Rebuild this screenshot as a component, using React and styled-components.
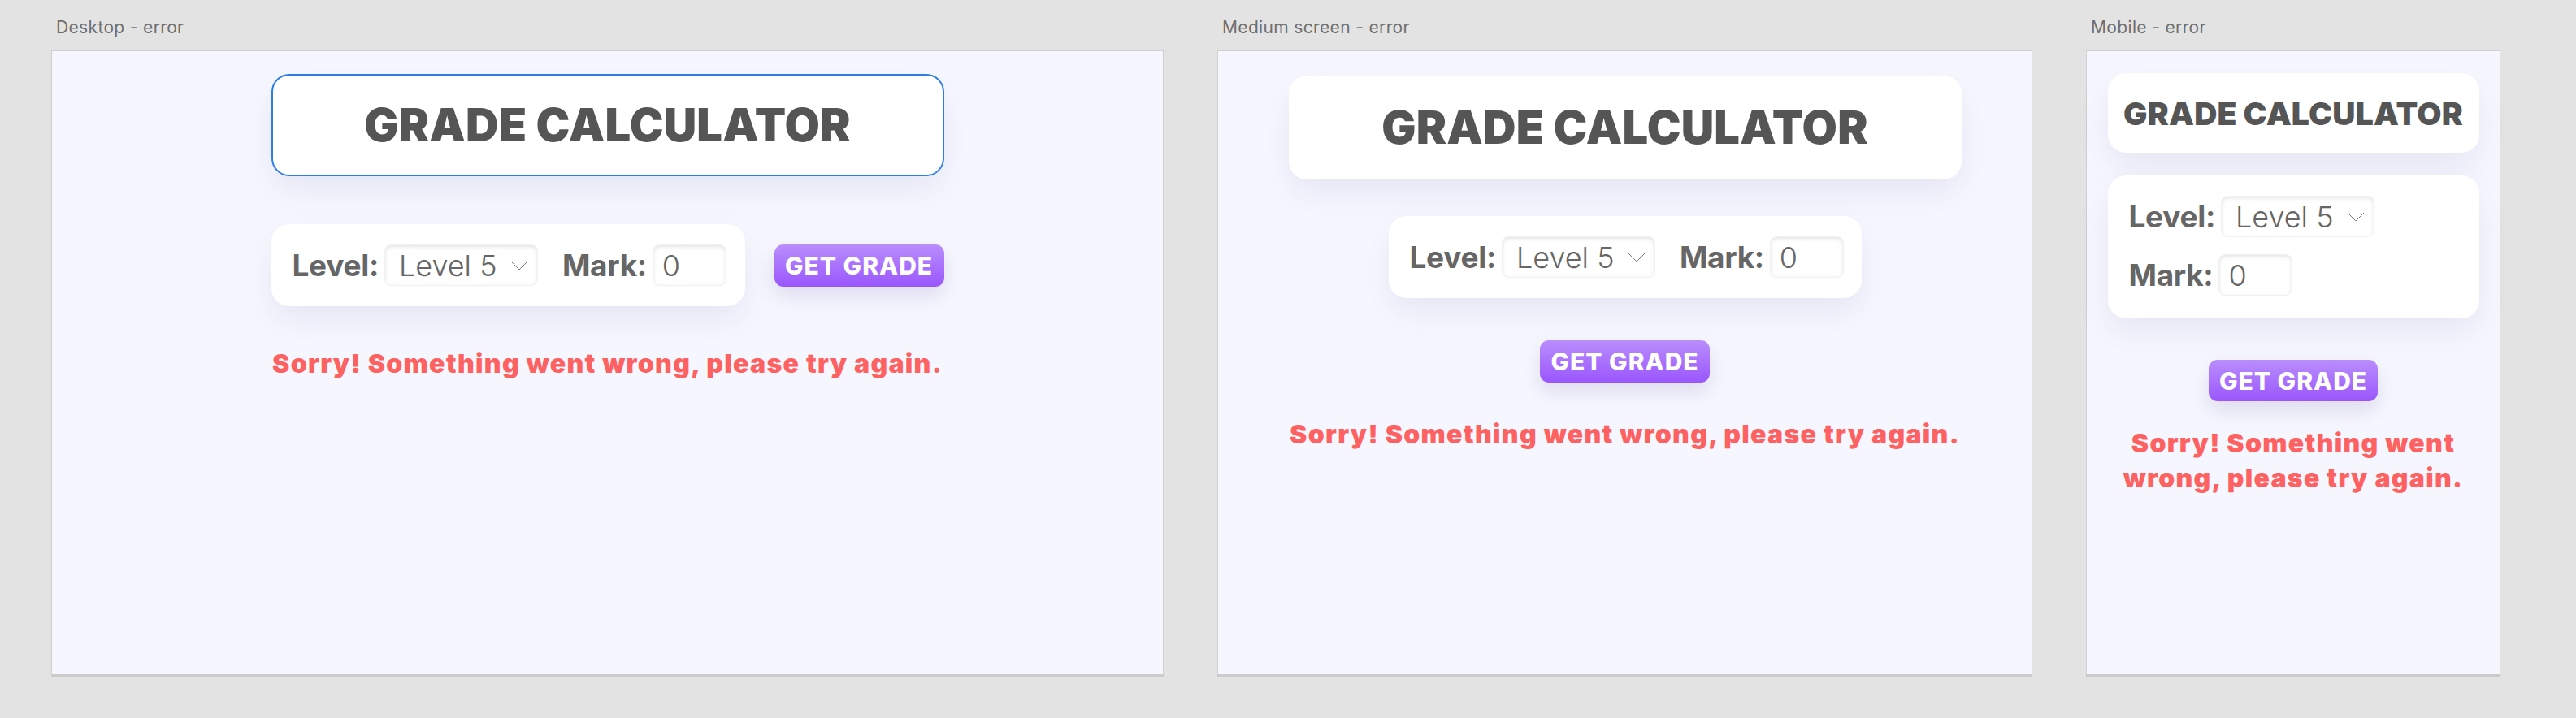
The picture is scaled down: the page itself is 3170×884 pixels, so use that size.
import React from 'react'
import styled, { createGlobalStyle, css } from 'styled-components'

const GlobalStyle = createGlobalStyle`
  html, body {
    margin: 0;
    padding: 0;
    background: #e3e3e3;
  }
  body {
    font-family: Inter, "Noto Sans", sans-serif;
  }
  * {
    box-sizing: border-box;
  }
`

const Canvas = styled.div`
  display: flex;
  align-items: flex-start;
  gap: 66px;
  padding: 21px 0 0 63px;
  min-height: 884px;
`

const Artboard = styled.section`
  width: ${p => p.$width}px;
  display: flex;
  flex-direction: column;
`

const ArtboardName = styled.div`
  font-size: 21px;
  line-height: 25px;
  letter-spacing: 0.35px;
  color: #6e6e6e;
  padding-left: 6px;
  margin-bottom: 16px;
`

const Screen = styled.div`
  height: 771px;
  background: #f6f7fe;
  border: 1px solid #cfcfcf;
  border-bottom: 3px solid #cbcbcb;
  display: flex;
  flex-direction: column;
  align-items: center;
  padding-top: ${p => p.$top}px;
`

const Stack = styled.div`
  display: flex;
  flex-direction: column;
  align-items: ${p => (p.$variant === 'medium' ? 'center' : 'stretch')};
  width: ${p => (p.$variant === 'mobile' ? '457px' : '828px')};
`

const TitleCard = styled.div`
  height: ${p => p.$height}px;
  width: 100%;
  background: #fff;
  border-radius: 22px;
  border: 2px solid ${p => (p.$selected ? '#2c7ee6' : 'transparent')};
  box-shadow: 0 18px 42px rgba(64, 72, 140, 0.09);
  display: flex;
  align-items: center;
  justify-content: center;
`

const Title = styled.h1`
  margin: 0;
  font-size: ${p => p.$size}px;
  font-weight: 900;
  line-height: 1;
  color: #555555;
  letter-spacing: 0.2px;
  white-space: nowrap;
`

const Controls = styled.div`
  display: flex;
  align-items: center;
  margin-top: ${p => p.$gapTop}px;
  ${p =>
    p.$variant === 'desktop'
      ? css`
          flex-direction: row;
          gap: 36px;
        `
      : css`
          flex-direction: column;
          gap: ${p.$variant === 'mobile' ? 51 : 52}px;
        `}
`

const FormCard = styled.div`
  width: ${p => p.$width}px;
  background: #fff;
  border-radius: 22px;
  box-shadow: 0 18px 42px rgba(64, 72, 140, 0.09);
  padding: 25px 24px 25px 26px;
  display: flex;
  flex-direction: ${p => (p.$stacked ? 'column' : 'row')};
  align-items: ${p => (p.$stacked ? 'flex-start' : 'center')};
  gap: ${p => (p.$stacked ? 21 : 30)}px;
  ${p => p.$stacked && css`padding-bottom: 28px;`}
`

const Field = styled.label`
  display: flex;
  align-items: center;
  gap: 7px;
`

const FieldName = styled.span`
  font-size: 37px;
  font-weight: 700;
  color: #666666;
  letter-spacing: -0.3px;
`

const insetBox = css`
  height: 51px;
  background: #fff;
  border: 1px solid #f1f1f1;
  border-radius: 8px;
  box-shadow: inset 0 2px 5px rgba(0, 0, 0, 0.11);
  font-family: inherit;
  font-size: 36px;
  font-weight: 300;
  color: #666666;
`

const LevelSelect = styled.div`
  ${insetBox};
  width: 189px;
  display: flex;
  align-items: center;
  justify-content: space-between;
  padding: 0 11px 0 17px;
`

const MarkInput = styled.input`
  ${insetBox};
  width: 91px;
  padding: 0 11px;
  outline: none;
`

const GetGradeButton = styled.button`
  width: ${p => (p.$small ? 208 : 209)}px;
  height: ${p => (p.$small ? 51 : 52)}px;
  border: none;
  border-radius: 11px;
  background: linear-gradient(180deg, #b98efc 0%, #9a56fd 100%);
  box-shadow: 0 12px 26px rgba(70, 60, 150, 0.14);
  color: #fff;
  font-family: inherit;
  font-size: 30px;
  font-weight: 800;
  letter-spacing: 1px;
  cursor: pointer;
  padding: 0;
`

const ErrorText = styled.p`
  margin: ${p => p.$gapTop}px 0 0;
  font-size: 32px;
  font-weight: 900;
  line-height: 43px;
  color: #fe6161;
  text-align: center;
  letter-spacing: 1.3px;
`

const Chevron = () => (
  <svg width="22" height="12" viewBox="0 0 22 12">
    <path d="M1 1 L11 11 L21 1" fill="none" stroke="#7a7a7a" strokeWidth="1" />
  </svg>
)

const layouts = {
  desktop: { top: 28, titleH: 126, titleSize: 56, controlsTop: 59, formW: 583, errorTop: 49 },
  medium: { top: 30, titleH: 128, titleSize: 56, controlsTop: 45, formW: 582, errorTop: 42 },
  mobile: { top: 27, titleH: 98, titleSize: 39, controlsTop: 28, formW: 457, errorTop: 30 },
}

const Calculator = ({ variant }) => {
  const l = layouts[variant]
  return (
    <Stack $variant={variant}>
      <TitleCard $height={l.titleH} $selected={variant === 'desktop'}>
        <Title $size={l.titleSize}>GRADE CALCULATOR</Title>
      </TitleCard>
      <Controls $variant={variant} $gapTop={l.controlsTop}>
        <FormCard $width={l.formW} $stacked={variant === 'mobile'}>
          <Field>
            <FieldName>Level:</FieldName>
            <LevelSelect>
              <span>Level 5</span>
              <Chevron />
            </LevelSelect>
          </Field>
          <Field>
            <FieldName>Mark:</FieldName>
            <MarkInput defaultValue="0" />
          </Field>
        </FormCard>
        <GetGradeButton $small={variant === 'mobile'}>GET GRADE</GetGradeButton>
      </Controls>
      <ErrorText $gapTop={l.errorTop}>Sorry! Something went wrong, please try again.</ErrorText>
    </Stack>
  )
}

const screens = [
  { name: 'Desktop - error', width: 1369, variant: 'desktop' },
  { name: 'Medium screen - error', width: 1003, variant: 'medium' },
  { name: 'Mobile - error', width: 510, variant: 'mobile' },
]

const App = () => {
  return (
    <>
      <GlobalStyle />
      <Canvas>
        {screens.map(s => (
          <Artboard key={s.name} $width={s.width}>
            <ArtboardName>{s.name}</ArtboardName>
            <Screen $top={layouts[s.variant].top}>
              <Calculator variant={s.variant} />
            </Screen>
          </Artboard>
        ))}
      </Canvas>
    </>
  )
}

export default App
